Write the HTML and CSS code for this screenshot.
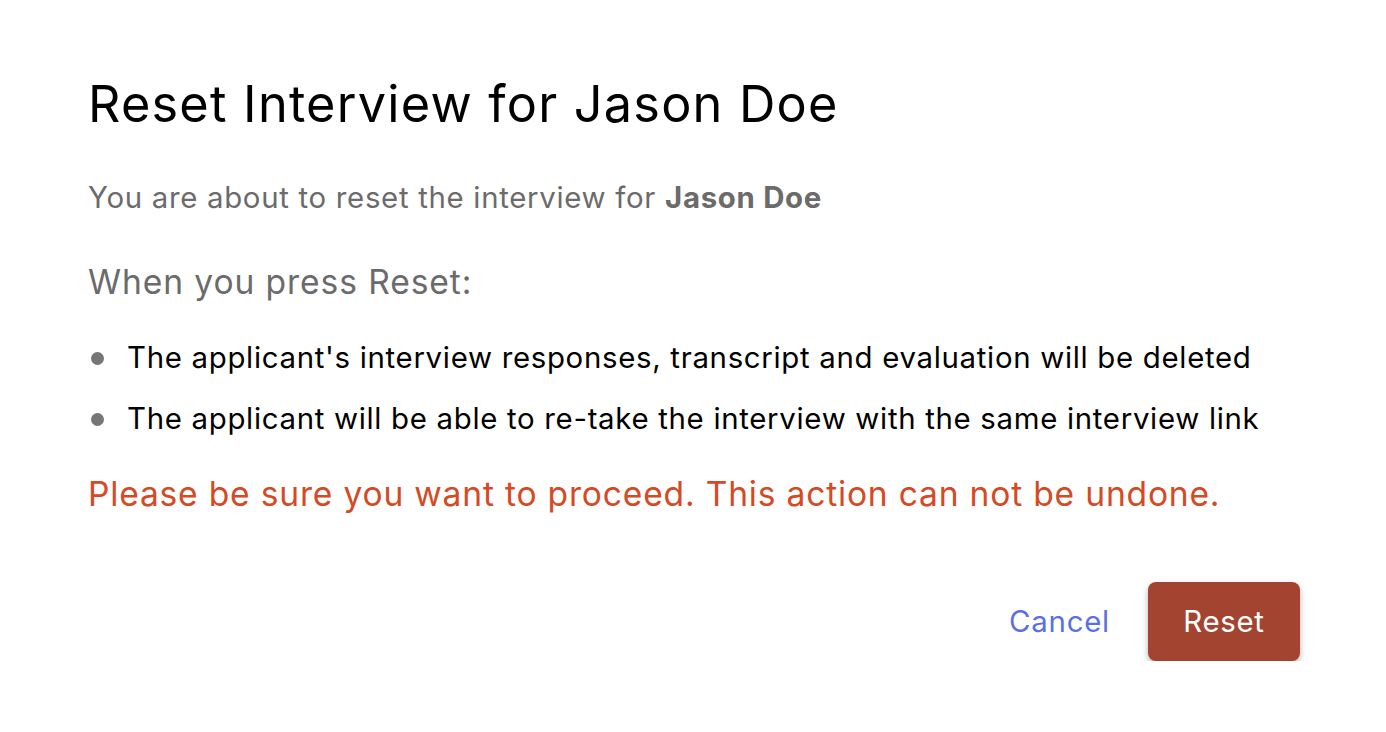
FILE: index.html
```html
<!DOCTYPE html>
<html lang="en">
<head>
<meta charset="utf-8">
<link rel="stylesheet" href="styles.css">
</head>
<body>
<div class="dialog">
  <h1 class="title">Reset Interview for Jason Doe</h1>
  <p class="intro">You are about to reset the interview for <strong>Jason Doe</strong></p>
  <p class="when">When you press Reset:</p>
  <ul class="list">
    <li>The applicant's interview responses, transcript and evaluation will be deleted</li>
    <li>The applicant will be able to re-take the interview with the same interview link</li>
  </ul>
  <p class="warning">Please be sure you want to proceed. This action can not be undone.</p>
  <div class="actions">
    <button class="btn-cancel">Cancel</button>
    <button class="btn-reset">Reset</button>
  </div>
</div>
</body>
</html>
```
FILE: styles.css
```css
html, body {
  margin: 0;
  padding: 0;
  background: #ffffff;
  font-family: "Inter", "Liberation Sans", sans-serif;
}
.dialog {
  padding: 68px 86px 0 88px;
  display: flex;
  flex-direction: column;
  letter-spacing: 0.022em;
}
.title {
  margin: 0;
  font-size: 50.4px;
  font-weight: 400;
  line-height: 72px;
  letter-spacing: 0.0245em;
  color: #000;
}
.intro {
  margin: 38px 0 0;
  font-size: 29.4px;
  line-height: 40px;
  letter-spacing: 0.0235em;
  color: #6b6b6b;
}
.intro strong {
  font-weight: 700;
  color: #6b6b6b;
}
.when {
  margin: 42px 0 0;
  font-size: 33.6px;
  line-height: 44px;
  letter-spacing: 0.027em;
  color: #6b6b6b;
}
.list {
  margin: 34px 0 0;
  padding: 0;
  list-style: none;
  display: flex;
  flex-direction: column;
  gap: 21px;
}
.list li {
  display: flex;
  align-items: center;
  font-size: 29.4px;
  line-height: 40px;
  letter-spacing: 0.0235em;
  color: #000;
}
.list li::before {
  content: "";
  width: 13px;
  height: 13px;
  border-radius: 50%;
  background: #767676;
  margin: 0 23px 0 3px;
  flex: none;
}
.warning {
  margin: 33px 0 0;
  font-size: 33.6px;
  line-height: 44px;
  letter-spacing: 0.024em;
  color: #d54a25;
}
.actions {
  margin-top: 66px;
  display: flex;
  justify-content: flex-end;
  align-items: center;
  gap: 38px;
}
.btn-cancel {
  border: none;
  background: none;
  font-family: inherit;
  letter-spacing: 0.026em;
  font-size: 29.4px;
  color: #5a6fe3;
  padding: 0;
  cursor: pointer;
}
.btn-reset {
  border: none;
  font-family: inherit;
  letter-spacing: 0.024em;
  font-size: 29.4px;
  color: #fff;
  background: #a34431;
  width: 152px;
  height: 79px;
  border-radius: 8px;
  box-shadow: 0 3px 6px rgba(0,0,0,0.3);
  cursor: pointer;
}
```
